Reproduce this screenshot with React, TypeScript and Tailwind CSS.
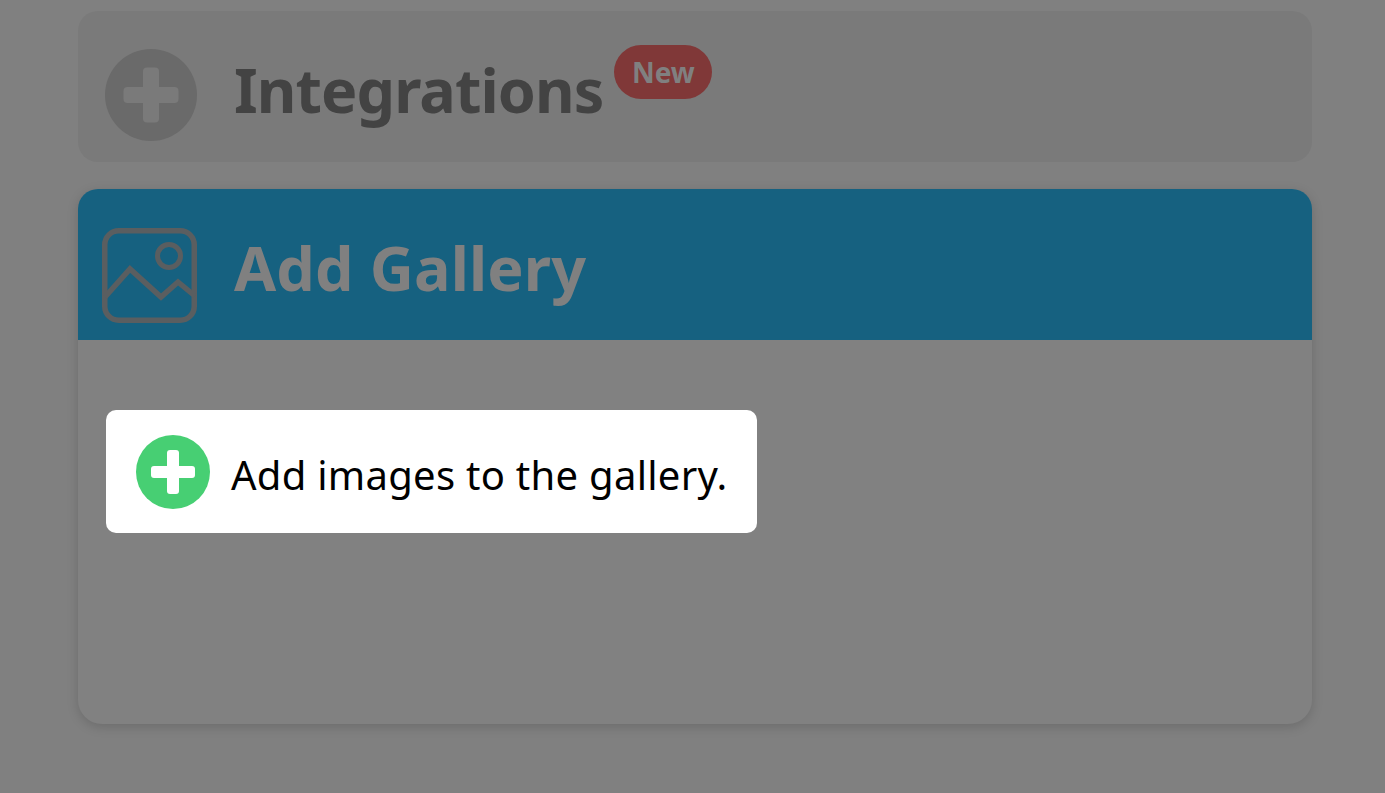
import React from "react";

function Plus({ size, circle, cross, arm, thick, r }: { size: number; circle: string; cross: string; arm: number; thick: number; r: number }) {
  const c = size / 2;
  return (
    <svg width={size} height={size} viewBox={`0 0 ${size} ${size}`} className="shrink-0">
      <circle cx={c} cy={c} r={c} fill={circle} />
      <rect x={c - arm / 2} y={c - thick / 2} width={arm} height={thick} rx={r} fill={cross} />
      <rect x={c - thick / 2} y={c - arm / 2} width={thick} height={arm} rx={r} fill={cross} />
    </svg>
  );
}

function GalleryIcon() {
  return (
    <svg width="95" height="95" viewBox="0 0 95 95" fill="none" stroke="#5a5e60" strokeWidth="5.5" className="shrink-0">
      <rect x="2.75" y="2.75" width="89.5" height="89.5" rx="14" />
      <circle cx="67" cy="28" r="11.5" strokeWidth="5" />
      <polyline points="3,69 28,41 59,69 76,54 93,68" strokeLinejoin="miter" />
    </svg>
  );
}

export default function App() {
  return (
    <div className="h-[793px] overflow-hidden bg-[#808080] px-[78px] pt-[11px] font-['Noto_Sans',sans-serif]">
      <div className="w-[1234px]">
        <div className="flex h-[151px] items-center rounded-[20px] bg-[#7a7a7a] pt-4 pl-[27px]">
          <Plus size={92} circle="#6a6a6a" cross="#7a7a7a" arm={55} thick={16} r={4} />
          <h2 className="mb-[11px] ml-[37px] text-[61px] leading-none font-bold tracking-[-0.93px] text-[#434343]">Integrations</h2>
          <span className="mb-[46px] ml-[11px] flex h-[54px] w-[98px] items-center justify-center rounded-[27px] bg-[#803838] text-[28px] font-bold text-[#808080]">New</span>
        </div>

        <div className="mt-[27px] h-[535px] rounded-t-[20px] rounded-b-3xl bg-[#818181] shadow-[0_3px_12px_rgba(0,0,0,0.16)]">
          <div className="flex h-[151px] items-center rounded-t-[20px] bg-[#166180] pt-[22px] pl-6">
            <GalleryIcon />
            <h2 className="mb-[17px] ml-[37px] text-[61px] leading-none font-bold tracking-[0.13px] text-[#808080]">Add Gallery</h2>
          </div>
          <div className="pt-[70px] pl-7">
            <button className="flex h-[123px] w-[651px] items-center rounded-[10px] bg-white pl-[30px]">
              <Plus size={74} circle="#47cf73" cross="#ffffff" arm={44} thick={12} r={3} />
              <span className="mt-[6px] ml-[21px] text-[40px] leading-none tracking-[0.27px] text-black">Add images to the gallery.</span>
            </button>
          </div>
        </div>
      </div>
    </div>
  );
}
